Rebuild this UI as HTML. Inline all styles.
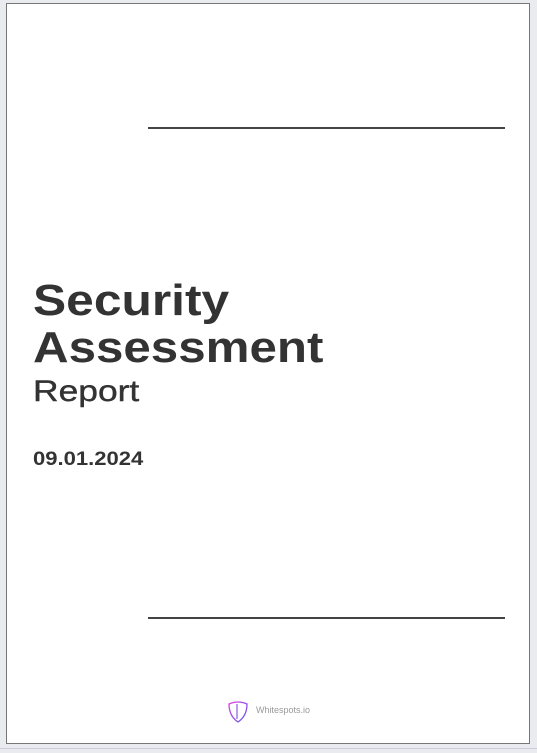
<!DOCTYPE html>
<html><head><style>
html,body{margin:0;padding:0;}
body{width:537px;height:753px;background:#eaebef;position:relative;overflow:hidden;font-family:"Liberation Sans",sans-serif;color:#333;}
.page{position:absolute;left:6px;top:3px;width:522px;height:739px;background:#fff;border:1px solid #777;}
.line{position:absolute;left:148px;width:357px;height:1.5px;background:#444;}
.t{position:absolute;left:33px;white-space:nowrap;line-height:1;transform-origin:left top;}
.bottom{position:absolute;left:0;top:748px;width:537px;height:1px;background:#c9cde0;}
</style></head><body>
<div class="page"></div>
<div class="line" style="top:127px"></div>
<div class="line" style="top:617px"></div>
<div class="t" style="top:279px;font-size:44px;font-weight:bold;transform:scaleX(1.13)">Security</div>
<div class="t" style="top:326px;font-size:44px;font-weight:bold;transform:scaleX(1.12)">Assessment</div>
<div class="t" style="top:377px;font-size:30px;transform:scaleX(1.18);-webkit-text-stroke:0.4px #333">Report</div>
<div class="t" style="top:450px;font-size:19px;font-weight:bold;transform:scaleX(1.16)">09.01.2024</div>
<svg style="position:absolute;left:227px;top:700px" width="22" height="24" viewBox="0 0 22 24">
<defs><linearGradient id="g" x1="0" y1="0" x2="1" y2="1"><stop offset="0" stop-color="#e040e0"/><stop offset="1" stop-color="#5a5af0"/></linearGradient></defs>
<path d="M2 4 Q11 0 20 4 Q20 16 11 22 Q2 16 2 4 Z" fill="none" stroke="url(#g)" stroke-width="1.3"/>
<path d="M10 4 V19" stroke="#8a5af0" stroke-width="1.2"/>
</svg>
<div class="t" style="left:256px;top:706px;font-size:9px;color:#999">Whitespots.io</div>
<div class="bottom"></div>
</body></html>
